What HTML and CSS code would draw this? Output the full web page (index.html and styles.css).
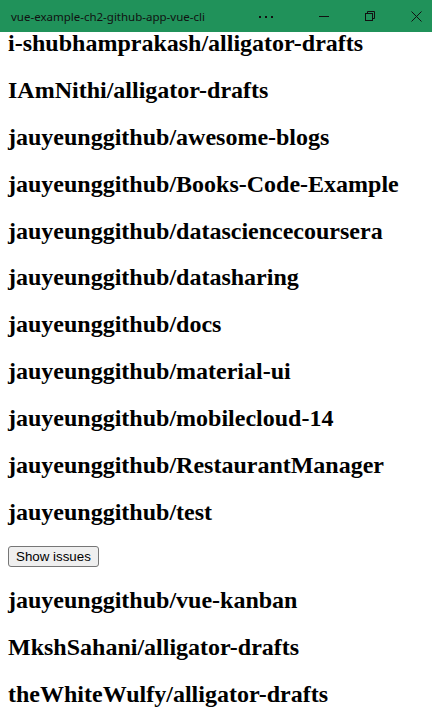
FILE: index.html
```html
<!DOCTYPE html>
<html>
<head>
<meta charset="utf-8">
<title>vue-example-ch2-github-app-vue-cli</title>
<link rel="stylesheet" href="styles.css">
</head>
<body>
<header class="titlebar">
  <span class="title">vue-example-ch2-github-app-vue-cli</span>
  <span class="dots">
    <svg width="14" height="2" viewBox="0 0 14 2" fill="#111"><rect x="0" y="0" width="2" height="2"/><rect x="6" y="0" width="2" height="2"/><rect x="12" y="0" width="2" height="2"/></svg>
  </span>
  <span class="controls">
    <span class="ctrl">
      <svg width="10" height="10" viewBox="0 0 10 10"><path d="M0 5.5H10" stroke="#111" stroke-width="1"/></svg>
    </span>
    <span class="ctrl">
      <svg width="10" height="10" viewBox="0 0 10 10" fill="none" stroke="#111" stroke-width="1"><rect x="0.5" y="2.5" width="7" height="7"/><path d="M2.5 2.5V0.5H9.5V7.5H7.5"/></svg>
    </span>
    <span class="ctrl">
      <svg width="11" height="11" viewBox="0 0 11 11"><path d="M0.5 0.5L10.5 10.5M10.5 0.5L0.5 10.5" stroke="#111" stroke-width="1"/></svg>
    </span>
  </span>
</header>
<main class="repos">
  <div class="repo"><h2 class="repo-name">i-shubhamprakash/alligator-drafts</h2></div>
  <div class="repo"><h2 class="repo-name">IAmNithi/alligator-drafts</h2></div>
  <div class="repo"><h2 class="repo-name">jauyeunggithub/awesome-blogs</h2></div>
  <div class="repo"><h2 class="repo-name">jauyeunggithub/Books-Code-Example</h2></div>
  <div class="repo"><h2 class="repo-name">jauyeunggithub/datasciencecoursera</h2></div>
  <div class="repo"><h2 class="repo-name">jauyeunggithub/datasharing</h2></div>
  <div class="repo"><h2 class="repo-name">jauyeunggithub/docs</h2></div>
  <div class="repo"><h2 class="repo-name">jauyeunggithub/material-ui</h2></div>
  <div class="repo"><h2 class="repo-name">jauyeunggithub/mobilecloud-14</h2></div>
  <div class="repo"><h2 class="repo-name">jauyeunggithub/RestaurantManager</h2></div>
  <div class="repo"><h2 class="repo-name">jauyeunggithub/test</h2><div class="actions"><button class="btn">Show issues</button></div></div>
  <div class="repo"><h2 class="repo-name">jauyeunggithub/vue-kanban</h2></div>
  <div class="repo"><h2 class="repo-name">MkshSahani/alligator-drafts</h2></div>
  <div class="repo"><h2 class="repo-name">theWhiteWulfy/alligator-drafts</h2></div>
</main>
</body>
</html>
```
FILE: styles.css
```css
html, body {
  margin: 0;
  padding: 0;
  background: #fff;
  overflow: hidden;
}
.titlebar {
  position: fixed;
  top: 0;
  left: 0;
  right: 0;
  height: 32px;
  background: #20925a;
  display: flex;
  align-items: center;
  z-index: 2;
}
.title {
  font-family: "Noto Sans", sans-serif;
  font-size: 11.5px;
  color: #111;
  padding-left: 11px;
  flex: 1;
}
.dots {
  width: 46px;
  height: 32px;
  display: flex;
  align-items: center;
  justify-content: center;
  margin-right: 12px;
  padding-top: 1px;
  box-sizing: border-box;
}
.controls {
  display: flex;
  margin-right: -7px;
}
.ctrl {
  width: 46px;
  height: 32px;
  display: flex;
  align-items: center;
  justify-content: center;
}
.repos {
  padding: 10px 8px 0;
}
.repo-name {
  font-family: "Liberation Serif", serif;
  font-size: 24px;
  font-weight: bold;
  margin: 19.92px 0;
  color: #000;
}
.actions {
  display: flex;
}
.btn {
  font-family: "Liberation Sans", sans-serif;
  font-size: 13.333px;
  padding: 1px 7px;
  background: #efefef;
  border: 1px solid #767676;
  border-radius: 3px;
  color: #000;
  height: 21px;
}
```
